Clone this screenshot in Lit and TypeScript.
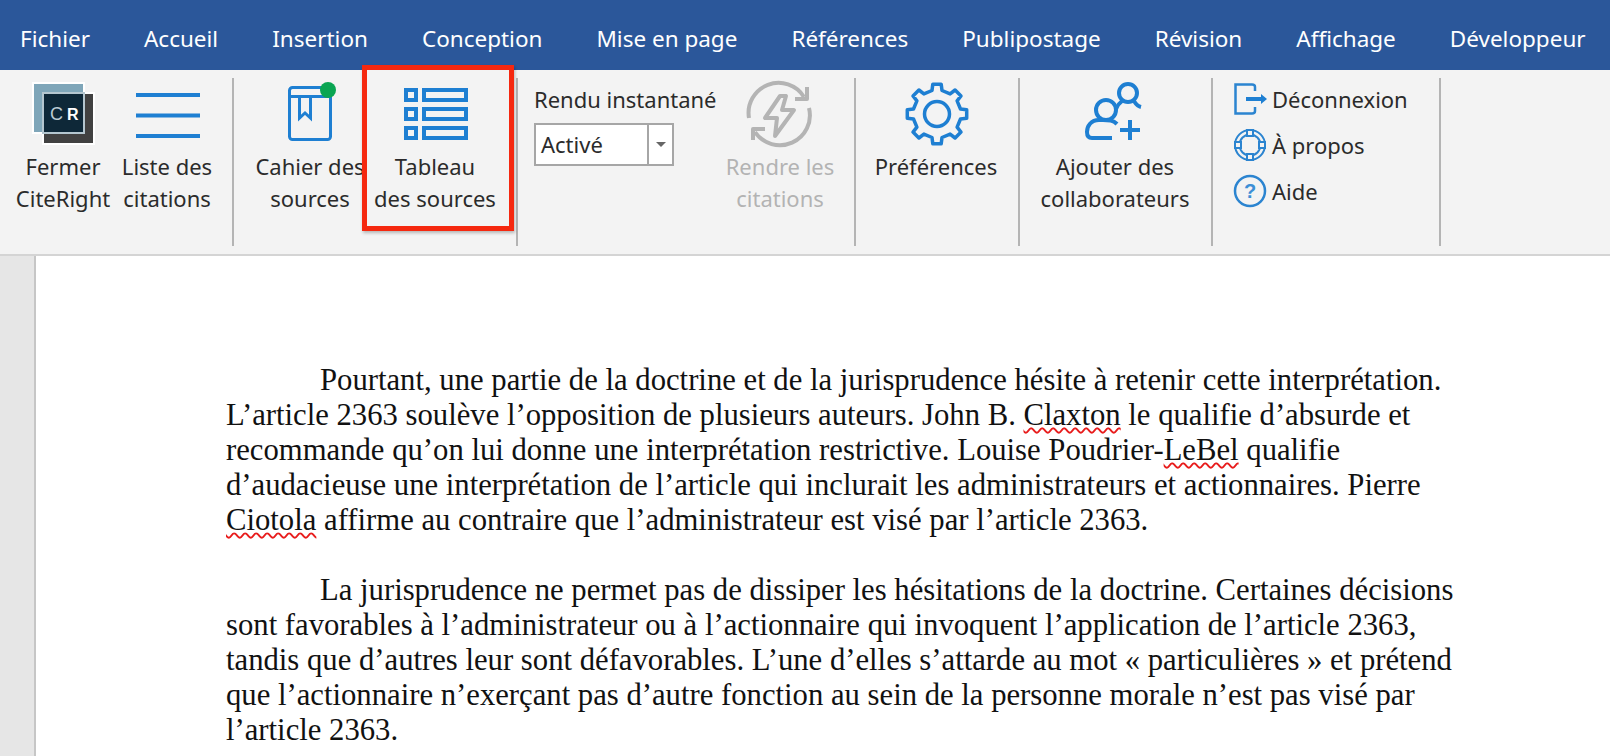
import { LitElement, html, css, svg } from 'lit';
import { customElement } from 'lit/decorators.js';

const TABS = ['Fichier', 'Accueil', 'Insertion', 'Conception', 'Mise en page', 'Références', 'Publipostage', 'Révision', 'Affichage', 'Développeur'];

// polygon outline for the preferences cog
function gearPoints(cx: number, cy: number, outer: number, inner: number, teeth: number) {
  const pts: string[] = [];
  const step = 360 / teeth;
  for (let i = 0; i < teeth; i++) {
    const a = i * step - 90;
    const at = (deg: number, r: number) => {
      const t = (deg * Math.PI) / 180;
      return `${(cx + r * Math.cos(t)).toFixed(1)},${(cy + r * Math.sin(t)).toFixed(1)}`;
    };
    pts.push(at(a - 12, inner), at(a - 8, outer), at(a + 8, outer), at(a + 12, inner));
  }
  return pts.join(' ');
}

const icons = {
  logo: svg`
    <rect x="6" y="1" width="51" height="50" fill="#7fa6b9" stroke="#fff" stroke-width="2"/>
    <rect x="16" y="11" width="51" height="51" fill="#414141" stroke="#fff" stroke-width="2"/>
    <rect x="16" y="11" width="41" height="40" fill="#0e2838" stroke="#b4c6cf" stroke-width="2"/>
    <text x="23" y="38" font-family="Liberation Sans, sans-serif" font-size="18" fill="#bccbd3">C</text>
    <text x="40" y="38" font-family="Liberation Sans, sans-serif" font-size="16" font-weight="700" fill="#fff">R</text>`,
  list: svg`
    <path d="M5 13H69M5 33.5H69M5 54H69" stroke="#1e7fd2" stroke-width="4" fill="none"/>`,
  book: svg`
    <rect x="15.5" y="5.5" width="41" height="52" rx="3" fill="none" stroke="#1e7fd2" stroke-width="3"/>
    <path d="M15 14.5H57" stroke="#1e7fd2" stroke-width="3"/>
    <path d="M25.5 15V36L31 31L36.5 36V15" fill="none" stroke="#1e7fd2" stroke-width="3"/>
    <circle cx="54" cy="8" r="8" fill="#0aa552"/>`,
  table: svg`
    <g fill="none" stroke="#1e7fd2" stroke-width="4">
      <rect x="7" y="8" width="10" height="10"/><rect x="25" y="8" width="42" height="10"/>
      <rect x="7" y="27" width="10" height="10"/><rect x="25" y="27" width="42" height="10"/>
      <rect x="7" y="46" width="10" height="10"/><rect x="25" y="46" width="42" height="10"/>
    </g>`,
  bolt: svg`
    <g fill="none" stroke="#b4b4b4" stroke-width="4" stroke-linejoin="round">
      <path d="M5 36A30 30 0 0 1 60 15"/>
      <path d="M63 5V17H51"/>
      <path d="M65 26A30 30 0 0 1 11 50"/>
      <path d="M21 47H9V58"/>
      <path d="M36 14L21 36H33L31 54L50 28H38L42 14Z"/>
    </g>`,
  gear: svg`
    <polygon points=${gearPoints(37, 32, 30, 24, 8)} fill="none" stroke="#1e7fd2" stroke-width="3.5" stroke-linejoin="round"/>
    <circle cx="37" cy="32" r="12.5" fill="none" stroke="#1e7fd2" stroke-width="3.5"/>`,
  users: svg`
    <g fill="none" stroke="#1e7fd2" stroke-width="4">
      <circle cx="49" cy="11" r="9"/>
      <path d="M37 27Q39 22 43 19M55 19Q58 24 62 25"/>
      <circle cx="27" cy="28" r="10"/>
      <path d="M38 42C34 38 30 38 24 38H20C12 38 8 44 8 50C8 54 10 56 13 56H33"/>
      <path d="M51 38V58M41 48H61"/>
    </g>`,
  exit: svg`
    <path d="M21 8V4Q21 1.500 18 1.500H1.500V30.500H18Q21 30.500 21 28V24" fill="none" stroke="#2b84d0" stroke-width="2.500"/>
    <path d="M12 16H28" stroke="#1e7fd2" stroke-width="4"/>
    <path d="M27 11L33 16L27 21Z" fill="#1e7fd2"/>`,
  ring: svg`
    <g fill="none" stroke="#2b84d0" stroke-width="2">
      <circle cx="16" cy="16" r="15"/><circle cx="16" cy="16" r="10.500"/>
      <g fill="#f3f3f3">
        <rect x="13" y="1" width="6" height="6"/><rect x="13" y="25" width="6" height="6"/>
        <rect x="1" y="13" width="6" height="6"/><rect x="25" y="13" width="6" height="6"/>
      </g>
    </g>`,
  help: svg`
    <circle cx="16" cy="16" r="15" fill="none" stroke="#2b84d0" stroke-width="2.500"/>
    <text x="16" y="23" text-anchor="middle" font-family="Liberation Sans, sans-serif" font-size="20" font-weight="700" fill="#3d8fd6">?</text>`
};

@customElement('app-root')
export class AppRoot extends LitElement {
  static styles = css`
    :host {
      display: block;
      width: 1610px;
      height: 756px;
      overflow: hidden;
      position: relative;
      background: #fff;
      font-family: 'Noto Sans', sans-serif;
    }
    .tabs {
      height: 70px;
      box-sizing: border-box;
      background: #2b579a;
      color: #fff;
      display: flex;
      align-items: center;
      gap: 54px;
      padding: 6px 0 0 20px;
      font-size: 22.500px;
      white-space: nowrap;
    }
    .ribbon {
      height: 186px;
      box-sizing: border-box;
      background: #f3f3f3;
      border-bottom: 2px solid #d4d4d4;
      display: flex;
      align-items: flex-start;
      color: #2b2b2b;
      font-size: 22px;
    }
    .group {
      margin-top: 8px;
      height: 168px;
      box-sizing: border-box;
      border-right: 2px solid #b4b4b4;
      display: grid;
      align-items: start;
    }
    .g1 { width: 234px; grid-template-columns: 126px 82px; }
    .g2 { width: 284px; padding-left: 13px; grid-template-columns: 126px 124px; }
    .g3 { width: 338px; grid-template-columns: 212px 100px; }
    .g4 { width: 164px; grid-template-columns: 160px; }
    .g5 { width: 193px; grid-template-columns: 190px; }
    .g6 { width: 228px; grid-template-columns: 1fr; padding-left: 21px; }
    .btn {
      display: flex;
      flex-direction: column;
      align-items: center;
      padding-top: 4px;
      white-space: nowrap;
      line-height: 32px;
      text-align: center;
    }
    .btn svg {
      width: 72px;
      height: 66px;
      margin-bottom: 2px;
      overflow: visible;
    }
    .off { color: #b3b3b3; }
    .snap { padding-left: 16px; }
    .snap-label { height: 45px; line-height: 42px; white-space: nowrap; }
    .select {
      width: 140px;
      height: 43px;
      box-sizing: border-box;
      background: #fff;
      border: 2px solid #a6a6a6;
      display: flex;
      align-items: center;
      padding-left: 5px;
    }
    .select span { flex: 1; padding-bottom: 2px; }
    .caret {
      width: 25px;
      height: 100%;
      box-sizing: border-box;
      border-left: 2px solid #a6a6a6;
      display: flex;
      align-items: center;
      justify-content: center;
    }
    .caret::before {
      content: '';
      border-left: 5px solid transparent;
      border-right: 5px solid transparent;
      border-top: 5px solid #666;
    }
    .rows { display: flex; flex-direction: column; gap: 2px; margin-top: -1px; }
    .row {
      height: 44px;
      display: flex;
      align-items: center;
      gap: 4px;
      white-space: nowrap;
    }
    .row svg { width: 34px; height: 32px; overflow: visible; flex: none; }
    .doc { display: flex; height: 500px; }
    .gutter {
      width: 36px;
      box-sizing: border-box;
      flex: none;
      background: #e6e6e6;
      border-right: 2px solid #c6c6c6;
    }
    .page {
      flex: 1;
      padding: 107px 0 0 190px;
      font-family: 'Liberation Serif', serif;
      font-size: 30.700px;
      line-height: 35.100px;
      color: #111;
      white-space: nowrap;
    }
    .para { margin-bottom: 34.500px; }
    .first { padding-left: 94px; }
    .sp {
      text-decoration: underline wavy #e81c1c;
      text-decoration-thickness: 1.500px;
      text-underline-offset: 2px;
    }
    .callout {
      position: absolute;
      left: 362px;
      top: 65px;
      width: 152px;
      height: 166px;
      box-sizing: border-box;
      border: 5px solid #f5280f;
      box-shadow: 1px 2px 3px rgba(0, 0, 0, 0.25);
    }
  `;

  renderBtn(icon: unknown, l1: string, l2?: string, cls = '') {
    return html`
      <div class="btn ${cls}">
        <svg viewBox="0 0 72 66">${icon}</svg>
        <div>${l1}</div>
        ${l2 ? html`<div>${l2}</div>` : ''}
      </div>
    `;
  }

  renderRow(icon: unknown, text: string) {
    return html`<div class="row"><svg viewBox="0 0 34 32">${icon}</svg><span>${text}</span></div>`;
  }

  render() {
    return html`
      <div class="tabs">${TABS.map(t => html`<span>${t}</span>`)}</div>
      <div class="ribbon">
        <div class="group g1">
          ${this.renderBtn(icons.logo, 'Fermer', 'CiteRight')}
          ${this.renderBtn(icons.list, 'Liste des', 'citations')}
        </div>
        <div class="group g2">
          ${this.renderBtn(icons.book, 'Cahier des', 'sources')}
          ${this.renderBtn(icons.table, 'Tableau', 'des sources')}
        </div>
        <div class="group g3">
          <div class="snap">
            <div class="snap-label">Rendu instantané</div>
            <div class="select"><span>Activé</span><div class="caret"></div></div>
          </div>
          ${this.renderBtn(icons.bolt, 'Rendre les', 'citations', 'off')}
        </div>
        <div class="group g4">${this.renderBtn(icons.gear, 'Préférences')}</div>
        <div class="group g5">${this.renderBtn(icons.users, 'Ajouter des', 'collaborateurs')}</div>
        <div class="group g6">
          <div class="rows">
            ${this.renderRow(icons.exit, 'Déconnexion')}
            ${this.renderRow(icons.ring, 'À propos')}
            ${this.renderRow(icons.help, 'Aide')}
          </div>
        </div>
      </div>
      <div class="doc">
        <div class="gutter"></div>
        <div class="page">
          <div class="para">
            <div class="first">Pourtant, une partie de la doctrine et de la jurisprudence hésite à retenir cette interprétation.</div>
            <div>L’article 2363 soulève l’opposition de plusieurs auteurs. John B. <span class="sp">Claxton</span> le qualifie d’absurde et</div>
            <div>recommande qu’on lui donne une interprétation restrictive. Louise Poudrier-<span class="sp">LeBel</span> qualifie</div>
            <div>d’audacieuse une interprétation de l’article qui inclurait les administrateurs et actionnaires. Pierre</div>
            <div><span class="sp">Ciotola</span> affirme au contraire que l’administrateur est visé par l’article 2363.</div>
          </div>
          <div class="para">
            <div class="first">La jurisprudence ne permet pas de dissiper les hésitations de la doctrine. Certaines décisions</div>
            <div>sont favorables à l’administrateur ou à l’actionnaire qui invoquent l’application de l’article 2363,</div>
            <div>tandis que d’autres leur sont défavorables. L’une d’elles s’attarde au mot « particulières » et prétend</div>
            <div>que l’actionnaire n’exerçant pas d’autre fonction au sein de la personne morale n’est pas visé par</div>
            <div>l’article 2363.</div>
          </div>
        </div>
      </div>
      <div class="callout"></div>
    `;
  }
}
